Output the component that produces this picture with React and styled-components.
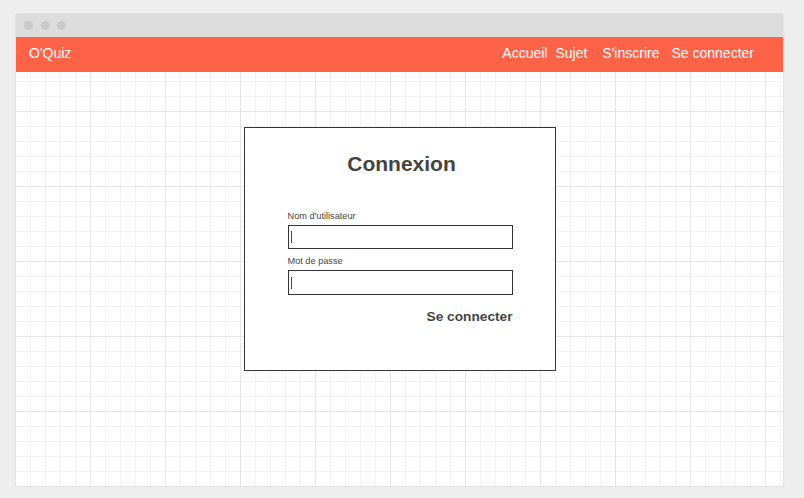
import styled, { createGlobalStyle } from "styled-components";

const GlobalStyle = createGlobalStyle`
    html, body {
        margin: 0;
        padding: 0;
        background-color: #eeeeee;
        font-family: "Liberation Sans", Arial, sans-serif;
    }
`;

const Window = styled.div`
    box-sizing: border-box;
    width: 769px;
    height: 474px;
    margin: 13px 0 0 15px;
    border-radius: 3px;
    overflow: hidden;
    display: flex;
    flex-direction: column;
    background-color: #ffffff;
    border: 1px solid #e2e2e2;
    border-top: none;
    box-shadow: 0 1px 2px rgba(0, 0, 0, 0.06);
`;

const TitleBar = styled.div`
    height: 24px;
    margin: 0 -1px;
    flex-shrink: 0;
    background-color: #dcdcdc;
    display: flex;
    align-items: center;
    gap: 7.5px;
    padding-left: 9px;
`;

const Dot = styled.span`
    width: 9px;
    height: 9px;
    border-radius: 50%;
    background-color: #c9c9c9;
`;

const Content = styled.div`
    flex: 1;
    background-color: #ffffff;
    background-image:
        linear-gradient(to right, #e6e6e6 1px, transparent 1px),
        linear-gradient(to bottom, #e6e6e6 1px, transparent 1px),
        linear-gradient(to right, #f2f2f2 1px, transparent 1px),
        linear-gradient(to bottom, #f2f2f2 1px, transparent 1px);
    background-size: 75px 75px, 75px 75px, 15px 15px, 15px 15px;
    background-position: -1px -1px;
`;

const Header = styled.header`
    height: 35px;
    box-sizing: border-box;
    margin-right: -1px;
    background-color: #ff6347;
    color: #ffffff;
    display: flex;
    align-items: flex-start;
    justify-content: space-between;
    padding: 8px 30px 0 13px;
    font-size: 14px;
    line-height: 16px;
`;

const Brand = styled.div``;

const Nav = styled.nav`
    display: flex;
`;

const NavLink = styled.span`
    margin-left: ${(p) => p.$space || 0}px;
`;

const Card = styled.div`
    box-sizing: border-box;
    width: 312px;
    height: 244px;
    margin: 55px auto 0;
    padding-top: 24px;
    border: 1px solid #333333;
    background-color: #ffffff;
    display: flex;
    flex-direction: column;
    align-items: center;
    color: #444444;
`;

const Title = styled.h1`
    margin: 0 0 0 4px;
    font-size: 21px;
    line-height: 24px;
    font-weight: bold;
`;

const Form = styled.form`
    width: 225px;
    margin: 35px 0 0 1px;
    display: flex;
    flex-direction: column;
`;

const Label = styled.label`
    font-size: 9.2px;
    line-height: 11px;
    color: #444444;
    margin-top: ${(p) => p.$top || 0}px;
    margin-bottom: 3px;
`;

const Field = styled.div`
    box-sizing: border-box;
    height: ${(p) => p.$height || 24}px;
    border: 1px solid #333333;
    display: flex;
    align-items: center;
    padding-left: 2px;
`;

const Caret = styled.span`
    width: 1px;
    height: 12px;
    background-color: #444444;
`;

const Submit = styled.div`
    align-self: flex-end;
    margin-top: 14px;
    font-size: 13.7px;
    line-height: 16px;
    font-weight: bold;
    color: #444444;
`;

export default function App() {
    return (
        <>
            <GlobalStyle />
            <Window>
                <TitleBar>
                    <Dot />
                    <Dot />
                    <Dot />
                </TitleBar>
                <Content>
                    <Header>
                        <Brand>O'Quiz</Brand>
                        <Nav>
                            <NavLink>Accueil</NavLink>
                            <NavLink $space={8}>Sujet</NavLink>
                            <NavLink $space={15}>S'inscrire</NavLink>
                            <NavLink $space={12}>Se connecter</NavLink>
                        </Nav>
                    </Header>

                    <Card>
                        <Title>Connexion</Title>
                        <Form>
                            <Label>Nom d'utilisateur</Label>
                            <Field><Caret /></Field>
                            <Label $top={7}>Mot de passe</Label>
                            <Field $height={25}><Caret /></Field>
                            <Submit>Se connecter</Submit>
                        </Form>
                    </Card>
                </Content>
            </Window>
        </>
    )
}
